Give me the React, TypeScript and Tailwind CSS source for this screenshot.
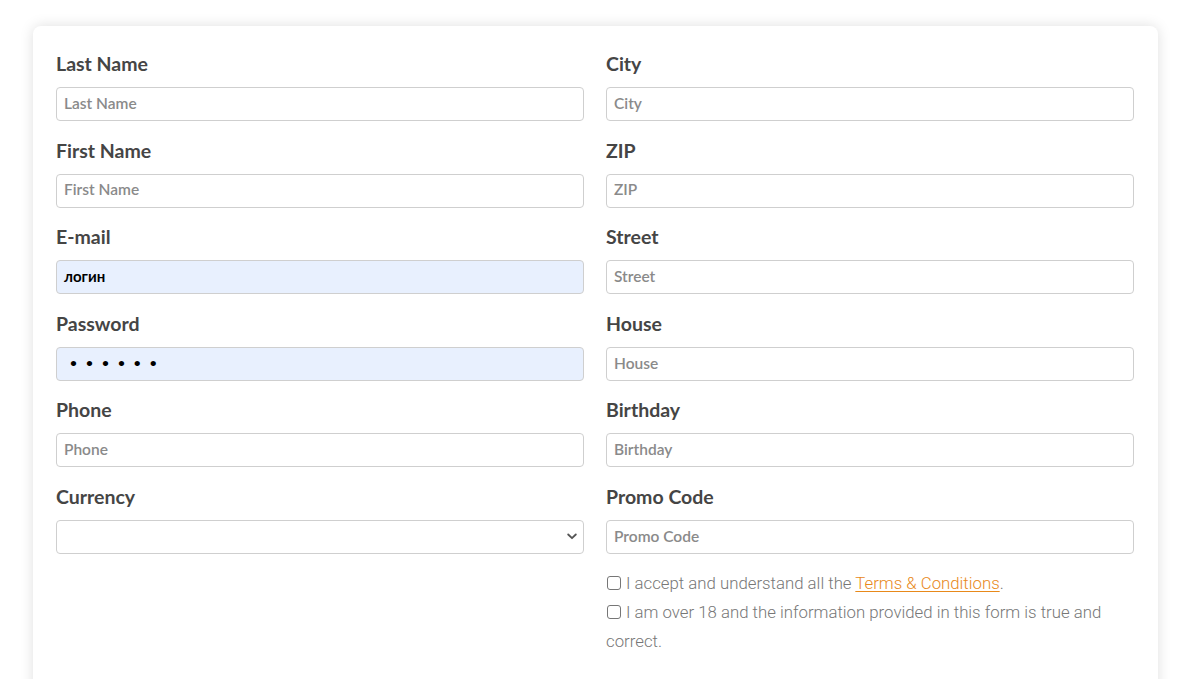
import React from "react";

type Field = { label: string; placeholder?: string; value?: string; kind?: "text" | "password" | "select"; filled?: boolean };

const left: Field[] = [
  { label: "Last Name", placeholder: "Last Name" },
  { label: "First Name", placeholder: "First Name" },
  { label: "E-mail", value: "логин", filled: true },
  { label: "Password", value: "••••••", kind: "password", filled: true },
  { label: "Phone", placeholder: "Phone" },
  { label: "Currency", kind: "select" },
];

const right: Field[] = [
  { label: "City", placeholder: "City" },
  { label: "ZIP", placeholder: "ZIP" },
  { label: "Street", placeholder: "Street" },
  { label: "House", placeholder: "House" },
  { label: "Birthday", placeholder: "Birthday" },
  { label: "Promo Code", placeholder: "Promo Code" },
];

const font = "font-['Lato','Noto_Sans',sans-serif]";

function FieldBox({ f }: { f: Field }) {
  return (
    <div className="mb-[17.6px]">
      <div className={`h-6 leading-6 text-[19.5px] font-bold text-[#454545] mb-[11px] ${font}`}>{f.label}</div>
      {f.kind === "select" ? (
        <div className="h-[34px] rounded-[4px] border border-[#cfcfcf] bg-white flex items-center justify-end pr-[6px]">
          <svg width="10" height="7" viewBox="0 0 10 7" fill="none">
            <path d="M1.2 1.5 L5 5.2 L8.8 1.5" stroke="#555" strokeWidth="1.8" strokeLinecap="round" strokeLinejoin="round" />
          </svg>
        </div>
      ) : (
        <div
          className={`h-[34px] rounded-[4px] border border-[#cfcfcf] flex items-center px-[7px] ${font} ${
            f.filled ? "bg-[#e8f0fe]" : "bg-white"
          }`}
        >
          {f.kind === "password" ? (
            <span className="text-black text-[12px] tracking-[9px] pl-[6px] font-bold -mt-[2px]">{f.value}</span>
          ) : f.value ? (
            <span className="text-black text-[15px] font-bold -mt-[1px]">{f.value}</span>
          ) : (
            <span className="text-[#8a8a8a] text-[15.5px] font-semibold -mt-[1px]">{f.placeholder}</span>
          )}
        </div>
      )}
    </div>
  );
}

function Check({ children }: { children: React.ReactNode }) {
  return (
    <div className="leading-[29px] text-[16.8px] font-light text-[#777777] font-['Roboto',sans-serif]">
      <span className="inline-block w-[14px] h-[14px] border border-[#767676] rounded-[3px] bg-white mr-[5px] align-[-1px] ml-[1px]" />
      {children}
    </div>
  );
}

export default function App() {
  return (
    <div className="min-h-[679px] bg-white pt-[26px] pl-[33px] pr-[24px] overflow-hidden">
      <div className="bg-white rounded-[8px] shadow-[0_0_14px_rgba(0,0,0,0.13)] pl-[23px] pr-[24px] pt-[26px] pb-[20px] min-h-[700px]">
        <div className="grid grid-cols-2 gap-x-[22px]">
          <div>
            {left.map((f) => (
              <FieldBox key={f.label} f={f} />
            ))}
          </div>
          <div>
            {right.map((f) => (
              <FieldBox key={f.label} f={f} />
            ))}
            <div className="-mt-[3px]">
              <Check>
                I accept and understand all the{" "}
                <a className="text-[#e8891a] underline underline-offset-2">Terms &amp; Conditions</a>.
              </Check>
              <Check>I am over 18 and the information provided in this form is true and correct.</Check>
            </div>
          </div>
        </div>
      </div>
    </div>
  );
}
